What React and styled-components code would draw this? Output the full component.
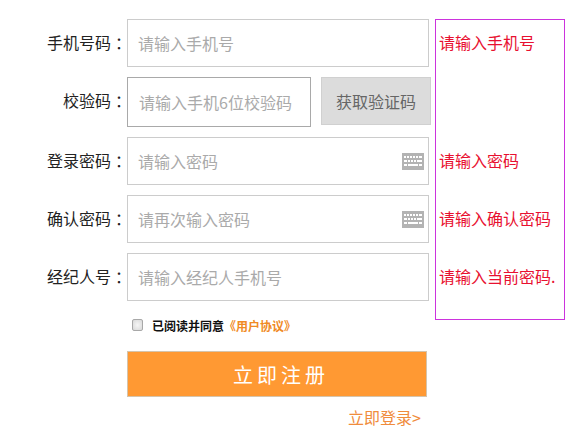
import React from "react";
import styled, { createGlobalStyle } from "styled-components";

const Global = createGlobalStyle`
  html, body { margin: 0; padding: 0; background: #fff; }
  body { font-family: "Noto Sans CJK SC", "Liberation Sans", sans-serif; }
  * { box-sizing: border-box; }
`;

const Page = styled.div`
  display: flex;
  align-items: flex-start;
  width: 574px;
  height: 432px;
  padding-top: 19px;
  overflow: hidden;
`;

const FormColumn = styled.form`
  display: flex;
  flex-direction: column;
  gap: 10px;
  width: 435px;
  flex: none;
`;

const Row = styled.div`
  display: flex;
  align-items: flex-start;
`;

const Label = styled.label`
  width: 127px;
  flex: none;
  height: 48px;
  line-height: 46px;
  text-align: right;
  font-size: 16px;
  color: #222;
  white-space: nowrap;
`;

const Colon = styled.span`
  font-family: "Noto Sans CJK TC", sans-serif;
  vertical-align: -1px;
`;

const Field = styled.div`
  display: flex;
  align-items: center;
  width: 302px;
  height: 48px;
  padding: 0 4px 0 10px;
  border: 1px solid #ccc;
  background: #fff;
`;

const CodeField = styled(Field)`
  width: 184px;
  height: 50px;
  padding-left: 11px;
  border-color: #a9a9a9;
`;

const Input = styled.input`
  flex: 1;
  min-width: 0;
  border: 0;
  outline: 0;
  padding: 0;
  font: inherit;
  font-size: 16px;
  background: transparent;
  &::placeholder { color: #aaa; opacity: 1; }
`;

const CodeButton = styled.button`
  width: 110px;
  height: 48px;
  margin-left: 10px;
  padding: 0;
  border: 1px solid #d0d0d0;
  background: #dcdcdc;
  color: #666;
  font: inherit;
  font-size: 16px;
`;

const Agreement = styled.div`
  display: flex;
  align-items: center;
  height: 20px;
  margin: 4px 0 0 132px;
  font-size: 12px;
  font-weight: 700;
  color: #111;
`;

const Check = styled.input`
  appearance: none;
  width: 11px;
  height: 12px;
  margin: 0 9px 0 0;
  border: 1px solid #a8a8a8;
  border-radius: 2px;
  background: radial-gradient(#f6f6f6, #d8d8d8);
`;

const Terms = styled.a`
  color: #f08a24;
`;

const Submit = styled.button`
  display: block;
  width: 300px;
  height: 46px;
  margin: 6px 0 0 127px;
  padding: 0 0 0 8px;
  border: 1px solid #d5c4ac;
  background: #ff9933;
  color: #fff;
  font-family: "Noto Sans CJK SC", sans-serif;
  font-size: 20px;
  letter-spacing: 4px;
`;

const LoginLink = styled.a`
  align-self: flex-end;
  margin: -2px 14px 0 0;
  font-size: 16px;
  line-height: 24px;
  color: #f08c3c;
`;

const ErrorPanel = styled.div`
  display: flex;
  flex-direction: column;
  gap: 10px;
  width: 130px;
  height: 301px;
  flex: none;
  padding-left: 3px;
  border: 1px solid #cc33dd;
`;

const ErrorText = styled.div`
  height: ${(p) => p.$h}px;
  line-height: ${(p) => p.$h - 3}px;
  font-size: 16px;
  color: #e81030;
  white-space: nowrap;
`;

const Keyboard = () => (
  <svg width="22" height="17" viewBox="0 0 22 17" style={{ flex: "none" }}>
    <rect width="22" height="17" fill="#b3b3b3" />
    <g fill="#fff">
      <rect x="2" y="3" width="2" height="2" />
      <rect x="5" y="3" width="2" height="2" />
      <rect x="8" y="3" width="2" height="2" />
      <rect x="11" y="3" width="2" height="2" />
      <rect x="14" y="3" width="2" height="2" />
      <rect x="17" y="3" width="3" height="2" />
      <rect x="2" y="7" width="3" height="2" />
      <rect x="6" y="7" width="2" height="2" />
      <rect x="9" y="7" width="2" height="2" />
      <rect x="12" y="7" width="2" height="2" />
      <rect x="15" y="7" width="5" height="2" />
      <rect x="2" y="11" width="3" height="2" />
      <rect x="6" y="11" width="10" height="2" />
      <rect x="17" y="11" width="3" height="2" />
    </g>
  </svg>
);

export default function App() {
  return (
    <>
      <Global />
      <Page>
        <FormColumn>
          <Row>
            <Label>手机号码<Colon>：</Colon></Label>
            <Field><Input placeholder="请输入手机号" /></Field>
          </Row>
          <Row>
            <Label>校验码<Colon>：</Colon></Label>
            <CodeField><Input placeholder="请输入手机6位校验码" /></CodeField>
            <CodeButton type="button">获取验证码</CodeButton>
          </Row>
          <Row>
            <Label>登录密码<Colon>：</Colon></Label>
            <Field><Input placeholder="请输入密码" /><Keyboard /></Field>
          </Row>
          <Row>
            <Label>确认密码<Colon>：</Colon></Label>
            <Field><Input placeholder="请再次输入密码" /><Keyboard /></Field>
          </Row>
          <Row>
            <Label>经纪人号<Colon>：</Colon></Label>
            <Field><Input placeholder="请输入经纪人手机号" /></Field>
          </Row>
          <Agreement>
            <Check type="checkbox" />
            已阅读并同意<Terms>《用户协议》</Terms>
          </Agreement>
          <Submit type="button">立即注册</Submit>
          <LoginLink>立即登录&gt;</LoginLink>
        </FormColumn>
        <ErrorPanel>
          <ErrorText $h={48}>请输入手机号</ErrorText>
          <ErrorText $h={50}></ErrorText>
          <ErrorText $h={48}>请输入密码</ErrorText>
          <ErrorText $h={48}>请输入确认密码</ErrorText>
          <ErrorText $h={48}>请输入当前密码.</ErrorText>
        </ErrorPanel>
      </Page>
    </>
  );
}
